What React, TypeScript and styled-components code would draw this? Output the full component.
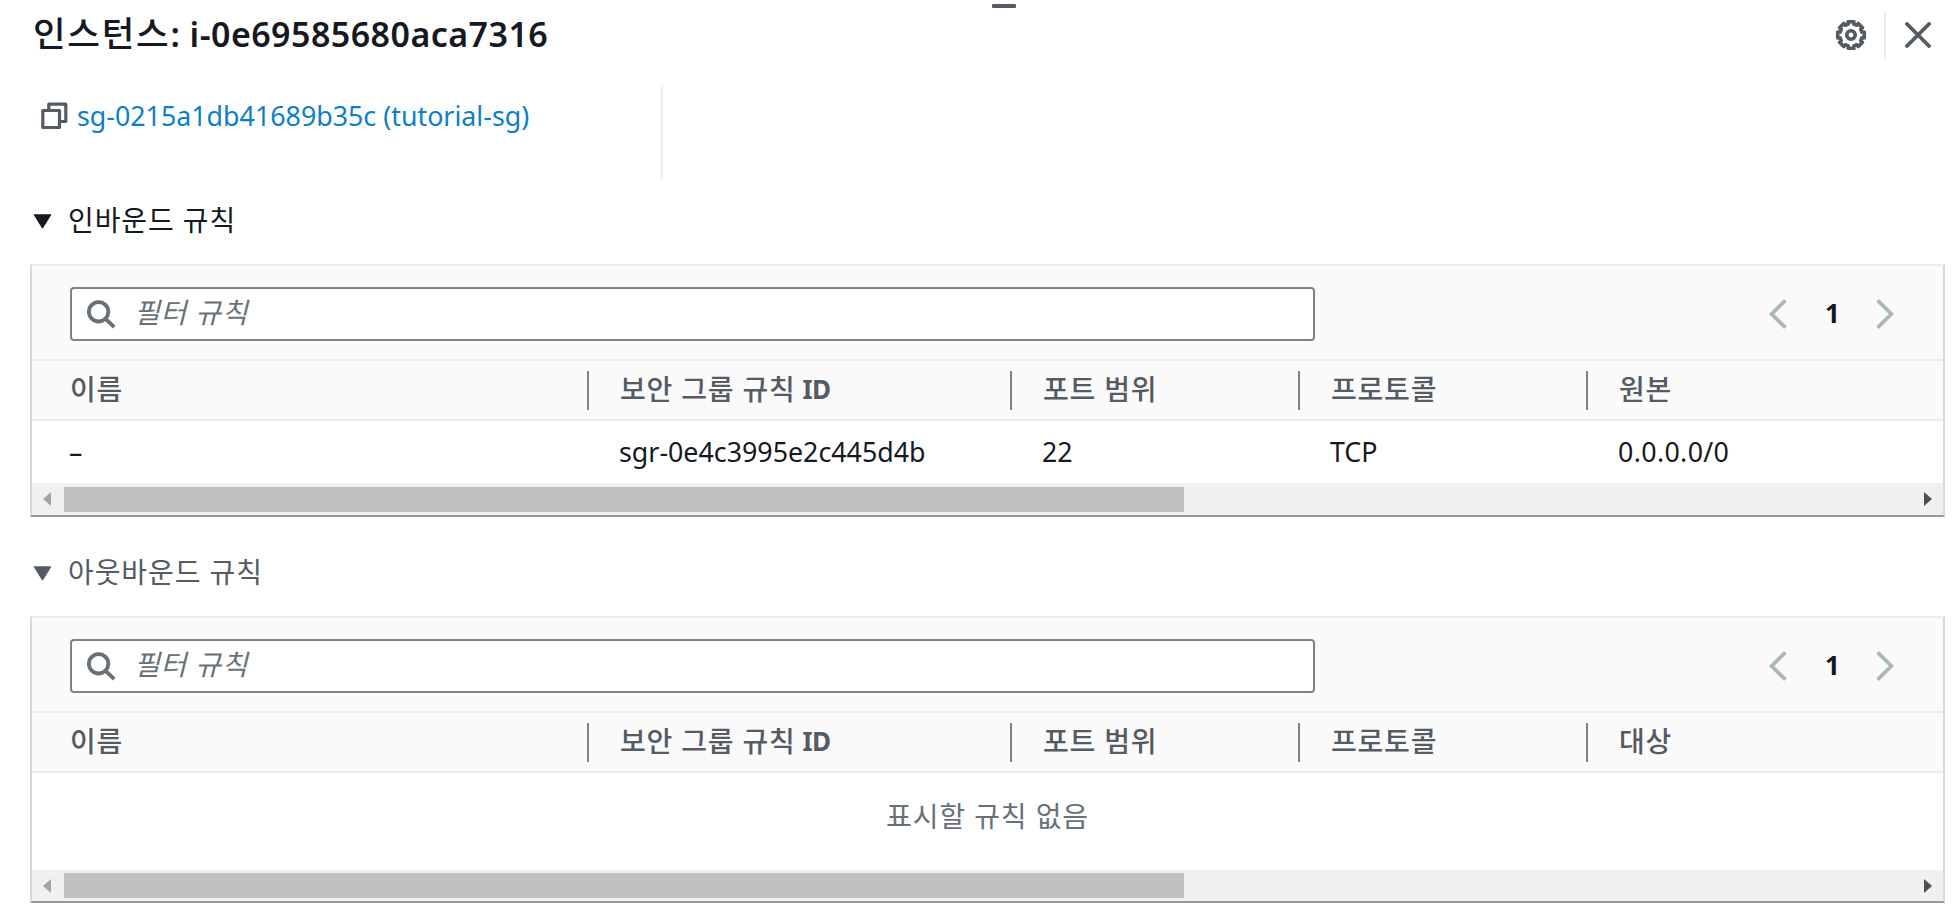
import React from 'react';
import styled, { createGlobalStyle } from 'styled-components';

const GlobalStyle = createGlobalStyle`
  *, *::before, *::after { box-sizing: border-box; }
  html, body { margin: 0; padding: 0; background: #fff; }
  body {
    font-family: "Noto Sans", "Noto Sans CJK KR", sans-serif;
    font-size: 26.8px;
    line-height: 36px;
    color: #16191f;
    overflow: hidden;
  }
`;

const Panel = styled.main`
  width: 1960px;
  height: 919px;
  padding: 0 15px 0 30px;
  overflow: hidden;
  display: flex;
  flex-direction: column;
`;

const Grip = styled.div`
  width: 24px;
  height: 4px;
  margin: 4px 0 0 962px;
  border-radius: 1px;
  background: #545b64;
  flex: none;
`;

const TitleBar = styled.header`
  height: 78px;
  flex: none;
  display: flex;
  justify-content: space-between;
  align-items: flex-start;
`;

const Title = styled.h1`
  margin: 3px 0 0 3px;
  font-size: 35.5px;
  line-height: 44px;
  font-weight: 500;
  letter-spacing: 1.7px;
  white-space: pre;
`;

const InstanceId = styled.span`
  font-size: 34px;
  font-weight: 600;
  letter-spacing: 0.45px;
`;

const Actions = styled.div`
  display: flex;
  align-items: center;
  height: 46px;
  margin: 4px 14px 0 0;
`;

const IconButton = styled.button`
  display: flex;
  padding: 0;
  border: 0;
  background: none;
  color: #545b64;
`;

const ActionDivider = styled.span`
  width: 2px;
  height: 46px;
  margin: 0 19px 0 17px;
  background: #eaeded;
`;

const Summary = styled.section`
  display: flex;
  align-items: flex-start;
  width: 633px;
  height: 93px;
  flex: none;
  padding: 11px 0 0 11px;
  border-right: 2px solid #eaeded;
`;

const GroupLink = styled.a`
  margin: 1px 0 0 8px;
  color: #0f7fc4;
  text-decoration: none;
  white-space: pre;
`;

const CopyButton = styled(IconButton)`
  margin-top: 5px;
`;

const SectionHead = styled.h2<{ $tone: string; $top: number }>`
  display: flex;
  align-items: center;
  height: 36px;
  flex: none;
  margin: ${(p) => p.$top}px 0 25px 3px;
  gap: 16px;
  color: ${(p) => p.$tone};
  font-size: 28px;
  font-weight: 400;
  letter-spacing: 0.9px;
  white-space: pre;
`;

const SectionLabel = styled.span`
  margin-bottom: 2px;
`;

const Card = styled.section<{ $height: number }>`
  height: ${(p) => p.$height}px;
  flex: none;
  display: flex;
  flex-direction: column;
  border: 2px solid;
  border-color: #eaeded #d5dbdb #8f9b9d #d5dbdb;
  border-radius: 1px;
`;

const Toolbar = styled.div`
  height: 93px;
  flex: none;
  display: flex;
  justify-content: space-between;
  align-items: flex-start;
  padding: 21px 49px 0 38px;
  background: #fafafa;
`;

const SearchBox = styled.label`
  display: flex;
  align-items: center;
  width: 1245px;
  height: 54px;
  padding-left: 15px;
  border: 2px solid #7b838b;
  border-radius: 4px;
  background: #fff;
  color: #687078;
`;

const SearchInput = styled.input`
  flex: 1;
  min-width: 0;
  height: 44px;
  margin: 0 0 4px 18px;
  padding: 0;
  border: 0;
  outline: 0;
  background: none;
  font: italic 28px/36px "Noto Sans", "Noto Sans CJK KR", sans-serif;
  letter-spacing: 0.8px;
  &::placeholder { color: #687078; opacity: 1; }
`;

const Pager = styled.nav`
  display: flex;
  align-items: center;
  height: 53px;
  color: #aab7b8;
`;

const PageNumber = styled.span`
  width: 89px;
  padding: 0 0 1px 2px;
  text-align: center;
  font-size: 26px;
  font-weight: 700;
  color: #16191f;
`;

const Columns = styled.div`
  display: grid;
  grid-template-columns: 557px 423px 288px 288px 1fr;
  align-items: center;
  flex: none;
`;

const HeadRow = styled(Columns)`
  height: 62px;
  background: #fafafa;
  border-top: 2px solid #eaeded;
  border-bottom: 2px solid #eaeded;
`;

const HeadCell = styled.div<{ $last?: boolean }>`
  display: flex;
  align-items: center;
  height: 39px;
  padding: 0 0 3px 31px;
  font-size: 28px;
  font-weight: 500;
  letter-spacing: 0.8px;
  color: #545b64;
  border-right: ${(p) => (p.$last ? '0' : '2px solid #7b838b')};
  white-space: pre;
  &:first-child { padding-left: 38px; }
`;

const HeadLatin = styled.b`
  margin: 1px 0 0 -1px;
  font-size: 26px;
  font-weight: 700;
  letter-spacing: -0.7px;
`;

const BodyRow = styled(Columns)`
  height: 62px;
`;

const Cell = styled.div`
  padding-left: 30px;
  white-space: pre;
  &:first-child { padding-left: 37px; }
  &:last-child { letter-spacing: 0.35px; }
`;

const Empty = styled.div`
  height: 97px;
  flex: none;
  padding-top: 25px;
  text-align: center;
  font-size: 28px;
  letter-spacing: 0.9px;
  color: #687078;
  white-space: pre;
`;

const ScrollTrack = styled.div`
  flex: 1;
  display: flex;
  align-items: center;
  background: #f0f0f0;
  padding: 0 11px 0 11px;
`;

const ScrollThumb = styled.div`
  width: 1120px;
  height: 25px;
  margin: 0 auto 0 13px;
  background: #c1c1c1;
`;

const Caret = ({ color }: { color: string }) => (
  <svg width="19" height="15" viewBox="0 0 19 15">
    <path d="M1.2 .8h16.6L9.5 14.2z" fill={color} stroke={color} strokeLinejoin="round" />
  </svg>
);

const GearIcon = () => {
  const teeth = 8;
  const points: string[] = [];
  for (let i = 0; i < teeth; i++) {
    const center = (i * 2 * Math.PI) / teeth - Math.PI / 2;
    [[-0.25, 11.3], [-0.22, 13.6], [0.22, 13.6], [0.25, 11.3]].forEach(([offset, radius]) => {
      const angle = center + offset;
      points.push(`${(16 + radius * Math.cos(angle)).toFixed(2)},${(16 + radius * Math.sin(angle)).toFixed(2)}`);
    });
  }
  return (
    <svg width="32" height="32" viewBox="0 0 32 32" fill="none" stroke="currentColor" strokeWidth="3.6">
      <polygon points={points.join(' ')} strokeLinejoin="round" />
      <circle cx="16" cy="16" r="4.2" />
    </svg>
  );
};

const CloseIcon = () => (
  <svg width="26" height="26" viewBox="0 0 26 26" fill="none" stroke="currentColor" strokeWidth="3.8" strokeLinecap="round">
    <path d="M2 2l22 22M24 2L2 24" />
  </svg>
);

const CopyIcon = () => (
  <svg width="28" height="28" viewBox="0 0 28 28" fill="none" stroke="currentColor" strokeWidth="3.2" strokeLinejoin="round">
    <path d="M1.8 8.5h16.7V25.5H1.8z" />
    <path d="M7.8 8V2.2h17V19.5H19" />
  </svg>
);

const SearchIcon = () => (
  <svg width="29" height="29" viewBox="0 0 29 29" fill="none" stroke="currentColor" strokeWidth="3.8">
    <circle cx="11.6" cy="11.8" r="9.7" />
    <path d="M18.6 18.8l8.6 8.4" />
  </svg>
);

const Chevron = ({ right }: { right?: boolean }) => (
  <svg width="18" height="30" viewBox="0 0 18 30" fill="none" stroke="currentColor" strokeWidth="3.8">
    <path d={right ? 'M1.6 1.4L15.4 15 1.6 28.6' : 'M16.4 1.4L2.6 15l13.8 13.6'} />
  </svg>
);

const ScrollArrow = ({ right }: { right?: boolean }) => (
  <svg width="8" height="14" viewBox="0 0 8 14">
    <path d={right ? 'M0 0l8 7-8 7z' : 'M8 0L0 7l8 7z'} fill={right ? '#505050' : '#a3a3a3'} />
  </svg>
);

const Scrollbar = () => (
  <ScrollTrack>
    <ScrollArrow />
    <ScrollThumb />
    <ScrollArrow right />
  </ScrollTrack>
);

const RulesTable = ({ lastColumn, height, children }: { lastColumn: string; height: number; children: React.ReactNode }) => (
  <Card $height={height}>
    <Toolbar>
      <SearchBox>
        <SearchIcon />
        <SearchInput placeholder="필터 규칙" />
      </SearchBox>
      <Pager>
        <Chevron />
        <PageNumber>1</PageNumber>
        <Chevron right />
      </Pager>
    </Toolbar>
    <HeadRow>
      <HeadCell>이름</HeadCell>
      <HeadCell>보안 그룹 규칙 <HeadLatin>ID</HeadLatin></HeadCell>
      <HeadCell>포트 범위</HeadCell>
      <HeadCell>프로토콜</HeadCell>
      <HeadCell $last>{lastColumn}</HeadCell>
    </HeadRow>
    {children}
    <Scrollbar />
  </Card>
);

const rule = ['–', 'sgr-0e4c3995e2c445d4b', '22', 'TCP', '0.0.0.0/0'];

export default function App() {
  return (
    <Panel>
      <GlobalStyle />
      <Grip />
      <TitleBar>
        <Title>인스턴스<InstanceId>: i-0e69585680aca7316</InstanceId></Title>
        <Actions>
          <IconButton aria-label="설정"><GearIcon /></IconButton>
          <ActionDivider />
          <IconButton aria-label="닫기"><CloseIcon /></IconButton>
        </Actions>
      </TitleBar>
      <Summary>
        <CopyButton aria-label="복사"><CopyIcon /></CopyButton>
        <GroupLink>sg-0215a1db41689b35c (tutorial-sg)</GroupLink>
      </Summary>
      <SectionHead $tone="#16191f" $top={24}><Caret color="#16191f" /><SectionLabel>인바운드 규칙</SectionLabel></SectionHead>
      <RulesTable lastColumn="원본" height={253}>
        <BodyRow>{rule.map((value) => <Cell key={value}>{value}</Cell>)}</BodyRow>
      </RulesTable>
      <SectionHead $tone="#545b64" $top={38}><Caret color="#545b64" /><SectionLabel>아웃바운드 규칙</SectionLabel></SectionHead>
      <RulesTable lastColumn="대상" height={287}>
        <Empty>표시할 규칙 없음</Empty>
      </RulesTable>
    </Panel>
  );
}
